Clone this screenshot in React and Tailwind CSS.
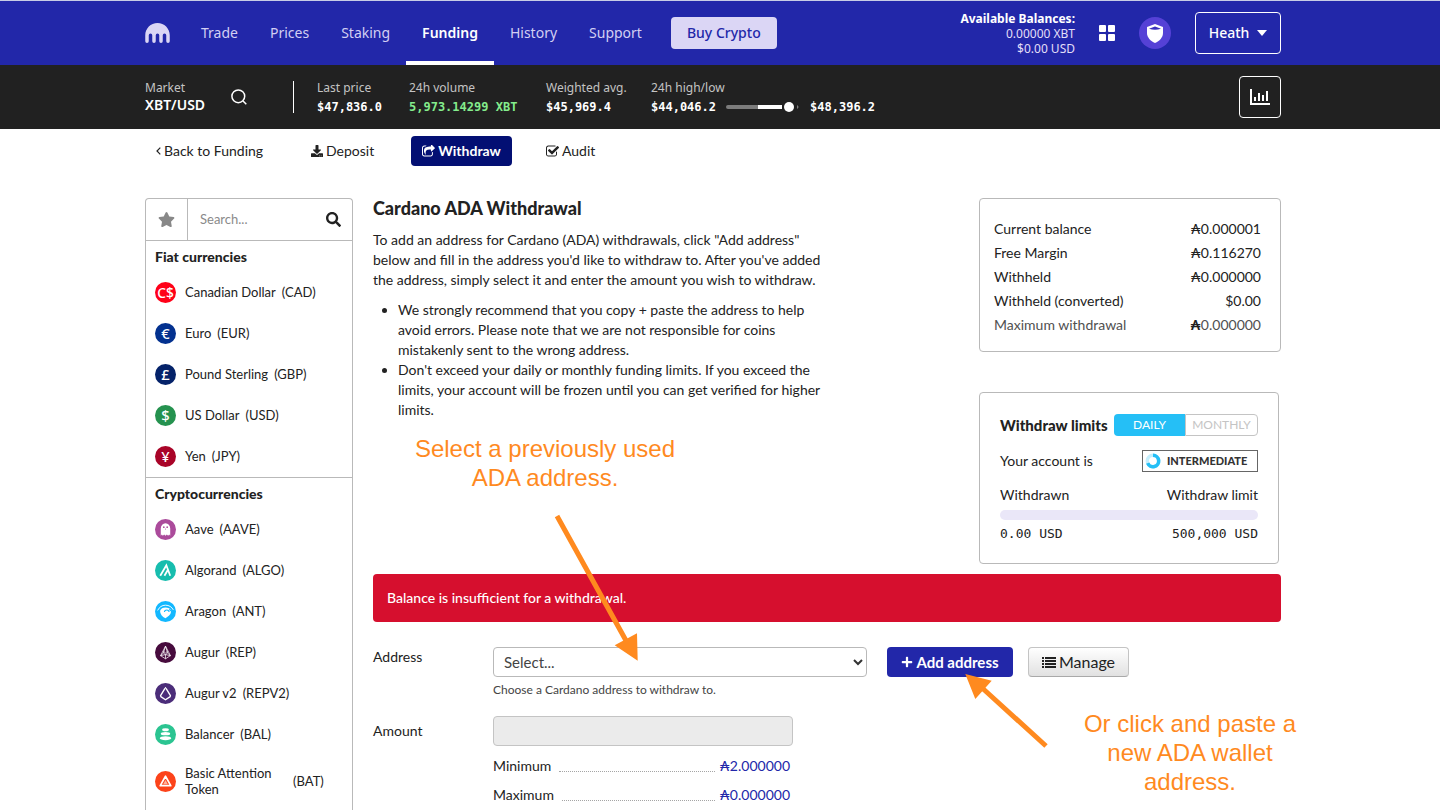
import React from "react";
import { FaStar, FaSearch, FaDownload, FaPlus } from "react-icons/fa";

const NAV = ["Trade", "Prices", "Staking", "Funding", "History", "Support"];

function KrakenLogo() {
  return (
    <svg viewBox="0 0 196 160" className="h-5 w-[25px]" fill="#dbd6f5" aria-label="Kraken">
      <path d="M98 0C44 0 0 44 0 98v48a14 14 0 0 0 28 0v-48a14 14 0 0 1 28 0v48a14 14 0 0 0 28 0v-48a14 14 0 0 1 28 0v48a14 14 0 0 0 28 0v-48a14 14 0 0 1 28 0v48a14 14 0 0 0 28 0v-48C196 44 152 0 98 0z" />
    </svg>
  );
}

function ShareSquare() {
  return (
    <svg viewBox="64 100 1680 1460" className="h-3 w-[13px]" fill="currentColor" aria-hidden="true">
      <path d="M1472 989v259q0 119-84.5 203.5t-203.5 84.5h-832q-119 0-203.5-84.5t-84.5-203.5v-832q0-119 84.5-203.5t203.5-84.5h255q13 0 22.5 9.5t9.5 22.5q0 27-26 32-77 26-133 60-10 4-16 4h-112q-66 0-113 47t-47 113v832q0 66 47 113t113 47h832q66 0 113-47t47-113v-214q0-19 18-28 28-13 54-37 16-16 35-8 21 9 21 29zm237-496l-384 384q-18 19-45 19-12 0-25-5-39-17-39-59v-192h-160q-323 0-438 131-119 137-74 473 3 23-20 34-8 2-12 2-16 0-26-13-10-14-21-31t-39.5-68.5-49.5-99.5-38.5-114-17.5-122q0-49 3.5-91t14-90 28-88 47-81.5 68.5-74 94.5-61.5 124.5-48.5 159.5-30.5 196.5-11h160v-192q0-42 39-59 13-5 25-5 26 0 45 19l384 384q19 19 19 45t-19 45z" />
    </svg>
  );
}

function CheckSquare() {
  return (
    <svg viewBox="0 100 1664 1460" className="h-3 w-[13px]" fill="currentColor" aria-hidden="true">
      <path d="M1408 930v318q0 119-84.5 203.5t-203.5 84.5h-832q-119 0-203.5-84.5t-84.5-203.5v-832q0-119 84.5-203.5t203.5-84.5h832q63 0 117 25 15 7 18 23 3 17-9 29l-49 49q-10 10-23 10-3 0-9-2-23-6-45-6h-832q-66 0-113 47t-47 113v832q0 66 47 113t113 47h832q66 0 113-47t47-113v-254q0-13 9-22l64-64q10-10 23-10 6 0 12 3 20 8 20 29zm231-489l-814 814q-24 24-57 24t-57-24l-430-430q-24-24-24-57t24-57l110-110q24-24 57-24t57 24l263 263 647-647q24-24 57-24t57 24l110 110q24 24 24 57t-24 57z" />
    </svg>
  );
}

function ListIcon() {
  return (
    <svg viewBox="0 0 14 11" className="h-[11px] w-[14px]" fill="currentColor" aria-hidden="true">
      <path d="M0 0h2v2H0zM3 0h11v2H3zM0 3h2v2H0zM3 3h11v2H3zM0 6h2v2H0zM3 6h11v2H3zM0 9h2v2H0zM3 9h11v2H3z" />
    </svg>
  );
}

function Header() {
  return (
    <header className="border-t border-[#c8cce6] bg-[#2227a9] pr-[14px] font-['Noto_Sans',sans-serif]">
      <div className="mx-auto flex h-16 w-full max-w-[1136px] items-center">
        <a href="#home" aria-label="Kraken home"><KrakenLogo /></a>
        <nav className="ml-[15px] flex h-16 items-stretch text-sm">
          {NAV.map((n) => (
            <a
              key={n}
              href={"#" + n.toLowerCase()}
              className={
                n === "Funding"
                  ? "flex items-center border-y-4 border-t-transparent border-b-white px-4 font-semibold text-white"
                  : "flex items-center px-4 text-[#d3cff3]"
              }
            >
              {n}
            </a>
          ))}
        </nav>
        <button className="ml-[13px] h-8 rounded bg-[#dbd6f5] px-4 text-sm font-medium text-[#2227a9]">Buy Crypto</button>
        <div className="ml-auto text-right text-xs leading-[15px] text-[#e2dff8]">
          <div className="font-bold text-white">Available Balances:</div>
          <div>0.00000 XBT</div>
          <div>$0.00 USD</div>
        </div>
        <button className="ml-6" aria-label="Apps">
          <svg viewBox="0 0 16 16" className="size-4" fill="#fff">
            <rect width="7" height="7" rx="1" />
            <rect x="9" width="7" height="7" rx="1" />
            <rect y="9" width="7" height="7" rx="1" />
            <rect x="9" y="9" width="7" height="7" rx="1" />
          </svg>
        </button>
        <button className="ml-6" aria-label="Security">
          <svg viewBox="0 0 32 32" className="size-8">
            <circle cx="16" cy="16" r="16" fill="#5541d6" />
            <path d="M16 7l8 3v6c0 4.500-3.500 8-8 10-4.500-2-8-5.500-8-10v-6z" fill="#fff" />
            <path d="M10 11.800l6-2.300 6 2.300q-6 1.800-12 0z" fill="#3a2fbd" />
          </svg>
        </button>
        <button className="ml-6 flex h-[42px] w-[86px] items-center justify-center gap-2 rounded border border-white text-sm font-medium text-white">
          Heath
          <svg viewBox="0 0 10 6" className="h-1.5 w-2.5" fill="#fff"><path d="M0 0h10L5 6z" /></svg>
        </button>
      </div>
    </header>
  );
}

function Stat({ label, className, children }) {
  return (
    <div className={className}>
      <div className="pt-px text-xs leading-[18px] text-[#c4c4c4]">{label}</div>
      <div className="font-['DejaVu_Sans_Mono',monospace] text-xs leading-5 font-bold">{children}</div>
    </div>
  );
}

function Ticker() {
  return (
    <div className="bg-[#212121] pr-[14px] font-['Noto_Sans',sans-serif] text-white">
      <div className="mx-auto flex h-16 w-full max-w-[1136px] items-center">
        <div className="w-[86px] pb-0.5">
          <div className="text-xs leading-[18px] text-[#c4c4c4]">Market</div>
          <div className="text-sm leading-4 font-semibold">XBT/USD</div>
        </div>
        <button className="w-[62px]" aria-label="Search markets">
          <svg viewBox="0 0 16 16" className="size-4" fill="none" stroke="#fff" strokeWidth="1.500">
            <circle cx="7.300" cy="7.300" r="6.400" />
            <path d="M12 12l3.300 3.300" />
          </svg>
        </button>
        <div className="h-8 border-l border-white" />
        <Stat label="Last price" className="ml-[23px] w-[92px]">$47,836.0</Stat>
        <Stat label="24h volume" className="w-[137px]"><span className="text-[#84ec8c]">5,973.14299 XBT</span></Stat>
        <Stat label="Weighted avg." className="w-[105px]">$45,969.4</Stat>
        <Stat label="24h high/low">
          <span className="flex items-center gap-2.5">
            $44,046.2
            <svg viewBox="0 0 74 10" className="h-2.5 w-[74px]">
              <rect y="3" width="34" height="4" rx="2" fill="#7c7c7c" />
              <rect x="32" y="3" width="24" height="4" fill="#fff" />
              <circle cx="63" cy="5" r="5" fill="#fff" />
              <path d="M71 3q3 2 0 4z" fill="#7c7c7c" />
            </svg>
            $48,396.2
          </span>
        </Stat>
        <button className="ml-auto flex size-[42px] items-center justify-center rounded border border-white" aria-label="Chart">
          <svg viewBox="0 0 20 16" className="h-4 w-5" fill="#fff">
            <path d="M0 0h2v14h18v2H0zM4 8h2v4H4zM8 4h2v8H8zM12 6h2v6h-2zM16 2h2v10h-2z" />
          </svg>
        </button>
      </div>
    </div>
  );
}

function Glyph({ children, size }) {
  return (
    <text x="10" y="15" textAnchor="middle" fontSize={size || 14} fill="#fff" fontWeight="500" fontFamily="Noto Sans, sans-serif">{children}</text>
  );
}

const FIAT = [
  { name: "Canadian Dollar", code: "CAD", color: "#ff0018", art: <Glyph size={13}>C$</Glyph> },
  { name: "Euro", code: "EUR", color: "#03318f", art: <Glyph>€</Glyph> },
  { name: "Pound Sterling", code: "GBP", color: "#042269", art: <Glyph>£</Glyph> },
  { name: "US Dollar", code: "USD", color: "#25924f", art: <Glyph>$</Glyph> },
  { name: "Yen", code: "JPY", color: "#a90428", art: <Glyph>¥</Glyph> },
];

const CRYPTO = [
  {
    name: "Aave", code: "AAVE", color: "#ab4b9b",
    art: (
      <>
        <path d="M5.500 9a4.500 5 0 0 1 9 0v7l-1-1.200-1 1.200-1.200-1.200-1.300 1.200-1.300-1.200L7.500 16l-1-1.200-1 1.200z" fill="#fff" />
        <circle cx="8.400" cy="7.800" r=".8" fill="#ab4b9b" />
        <circle cx="11.600" cy="7.800" r=".8" fill="#ab4b9b" />
        <circle cx="10" cy="9.500" r=".5" fill="#ab4b9b" />
      </>
    ),
  },
  {
    name: "Algorand", code: "ALGO", color: "#17bdae",
    art: <path d="M5 15l5.800-10 3.700 10M9 15l3.300-5.700" fill="none" stroke="#fff" strokeWidth="1.700" />,
  },
  {
    name: "Aragon", code: "ANT", color: "#13b8ff",
    art: (
      <>
        <path d="M2.500 9Q5 4 10 4t7.500 4.500" fill="none" stroke="#fff" strokeWidth=".9" />
        <path d="M4.800 9.500Q6 6.300 10 6.300t5.500 3q-.3 3-2.300 4.700L10 16.500Q5 14 4.800 9.500z" fill="#fff" />
        <path d="M9 10.500q0-2 2.200-2t2.200 2M13.500 8l3 2.500" fill="none" stroke="#13b8ff" strokeWidth="1" />
      </>
    ),
  },
  {
    name: "Augur", code: "REP", color: "#470b3d",
    art: (
      <path
        d="M10 4L5.300 13l4.700 3 4.700-3zM10 4L8 10.500l2 1.500 2-1.500zM5.300 13L8 10.500M14.700 13L12 10.500M10 12v4M5.300 13l4.700-1 4.700 1M7.700 8.500l2.300 2 2.300-2"
        fill="none" stroke="#fff" strokeWidth=".7"
      />
    ),
  },
  {
    name: "Augur v2", code: "REPV2", color: "#4b2d79",
    art: (
      <path d="M9.200 5.500L5.300 12M10.800 5.500l3.900 6.500M5.500 13l4.500 3 4.500-3M10 4.500h.01" fill="none" stroke="#fff" strokeWidth="1.300" strokeLinecap="round" />
    ),
  },
  {
    name: "Balancer", code: "BAL", color: "#2bc491",
    art: (
      <g fill="#fff">
        <ellipse cx="10" cy="5.500" rx="3.200" ry="1.400" />
        <ellipse cx="10" cy="9.200" rx="4.500" ry="1.600" />
        <ellipse cx="10" cy="13.500" rx="5.500" ry="1.900" />
      </g>
    ),
  },
  {
    name: "Basic Attention Token", code: "BAT", color: "#fc431a",
    art: (
      <>
        <path d="M10 5L5 14h10z" fill="none" stroke="#fff" strokeWidth="1.600" strokeLinejoin="round" />
        <path d="M10 8.500l-2.200 4h4.400z" fill="#ffb49f" />
      </>
    ),
  },
];

function CurrencyList({ title, items }) {
  return (
    <section className="border-t border-[#b9b9b9] px-[9px]">
      <h3 className="flex h-[31px] items-center pt-px text-sm font-black">{title}</h3>
      <ul>
        {items.map((c) => (
          <li key={c.code}>
            <a href={"#" + c.code} className={c.code === "BAT" ? "flex h-[52px] items-center" : "flex h-10 items-center mb-px"}>
              <svg viewBox="0 0 20 20" className="size-[21px] shrink-0">
                <circle cx="10" cy="10" r="10" fill={c.color} />
                {c.art}
              </svg>
              <span className={c.code === "BAT" ? "ml-[9px] w-[108px] text-[13px] leading-4" : "ml-[9px] text-[13px] leading-4"}>{c.name}</span>
              <span className={c.code === "BAT" ? "text-[13px] leading-4" : "ml-1.5 text-[13px] leading-4"}>({c.code})</span>
            </a>
          </li>
        ))}
      </ul>
    </section>
  );
}

const BALANCES = [
  ["Current balance", "₳", "0.000001"],
  ["Free Margin", "₳", "0.116270"],
  ["Withheld", "₳", "0.000000"],
  ["Withheld (converted)", "$", "0.00"],
  ["Maximum withdrawal", "₳", "0.000000"],
];

function LimitRow({ name, value, className }) {
  return (
    <div className={className}>
      <span>{name}</span>
      <span className="mr-1 mb-1 ml-2 flex-1 border-b border-dotted border-[#a5a5a5]" />
      <span className="text-[#2227a9]">{value}</span>
    </div>
  );
}

export default function App() {
  return (
    <div className="flex min-h-screen flex-col bg-white font-['Lato','Noto_Sans',sans-serif] text-[#222]">
      <Header />
      <Ticker />
      <div className="flex flex-1 flex-col pr-[14px]">
        <div className="mx-auto flex w-full max-w-[1136px] flex-1 flex-col">
          <nav className="mt-[7px] flex h-[30px] gap-[23px] text-sm">
            <a href="#funding" className="flex w-[132px] items-center gap-[3px] px-[11px]">
              <svg viewBox="0 0 5 8" className="h-2 w-[5px]" fill="none" stroke="currentColor" strokeWidth="1.200" aria-hidden="true">
                <path d="M4.300 .7L1 4l3.300 3.300" />
              </svg>
              Back to Funding
            </a>
            <a href="#deposit" className="flex w-[88px] items-center gap-[3px] px-[11px]"><FaDownload className="size-3" />Deposit</a>
            <a href="#withdraw" className="flex w-[101px] items-center justify-center gap-[3px] rounded bg-[#030f73] font-bold text-white"><ShareSquare />Withdraw</a>
            <a href="#audit" className="flex items-center gap-[3px] px-[11px]"><CheckSquare />Audit</a>
          </nav>
          <div className="mt-8 flex flex-1 gap-5">
            <aside className="w-[208px] shrink-0 rounded-t border border-b-0 border-[#b9b9b9]">
              <div className="flex h-[41px] items-stretch">
                <button className="flex w-[42px] items-center justify-center border-r border-[#b9b9b9]" aria-label="Favourites">
                  <FaStar className="size-[17px] text-[#888]" />
                </button>
                <input aria-label="Search currencies" placeholder="Search..." className="w-0 flex-1 px-3 text-[13px] outline-none placeholder:text-[#8a8a8a]" />
                <button className="pr-[11px]" aria-label="Search"><FaSearch className="size-[15px]" /></button>
              </div>
              <CurrencyList title="Fiat currencies" items={FIAT} />
              <CurrencyList title="Cryptocurrencies" items={CRYPTO} />
            </aside>

            <main className="relative min-w-0 flex-1">
              <div className="flex justify-between">
                <div className="w-[460px] text-sm leading-5">
                  <h1 className="mb-3 text-lg leading-5 font-black">Cardano ADA Withdrawal</h1>
                  <p className="mb-2.5">
                    To add an address for Cardano (ADA) withdrawals, click "Add address"<br />
                    below and fill in the address you'd like to withdraw to. After you've added<br />
                    the address, simply select it and enter the amount you wish to withdraw.
                  </p>
                  <ul className="list-disc pl-[25px]">
                    <li>
                      We strongly recommend that you copy + paste the address to help<br />
                      avoid errors. Please note that we are not responsible for coins<br />
                      mistakenly sent to the wrong address.
                    </li>
                    <li>
                      Don't exceed your daily or monthly funding limits. If you exceed the<br />
                      limits, your account will be frozen until you can get verified for higher<br />
                      limits.
                    </li>
                  </ul>
                </div>
                <div className="w-[302px] shrink-0">
                  <dl className="rounded border border-[#b9b9b9] pt-[18px] pr-[19px] pb-[14px] pl-[14px] text-sm leading-6">
                    {BALANCES.map(([k, unit, v], i) => (
                      <div key={k} className={i === 4 ? "flex justify-between text-[#505050]" : "flex justify-between"}>
                        <dt>{k}</dt>
                        <dd><span className={i === 4 ? "font-bold text-[#222]" : ""}>{unit}</span>{v}</dd>
                      </div>
                    ))}
                  </dl>
                  <section className="mt-10 mr-0.5 rounded border border-[#b9b9b9] px-5 pt-[21px] pb-[19px] text-sm leading-5">
                    <div className="flex h-[22px] items-center justify-between">
                      <h2 className="text-[15px] font-black">Withdraw limits</h2>
                      <div className="flex h-[22px] w-36 text-xs">
                        <button className="flex-1 rounded-l bg-[#25bff6] text-white">DAILY</button>
                        <button className="flex-1 rounded-r border border-[#c4c4c4] text-[#c4c4c4]">MONTHLY</button>
                      </div>
                    </div>
                    <div className="mt-[14px] flex h-[22px] items-center justify-between">
                      <span>Your account is</span>
                      <span className="flex h-[22px] w-[116px] items-center gap-1.5 border border-[#666] pl-0.5 text-[11px] font-black text-[#333]">
                        <svg viewBox="0 0 16 16" className="size-4" fill="none" strokeWidth="3.500">
                          <circle cx="8" cy="8" r="5.700" stroke="#c5eefc" />
                          <path d="M8 2.300a5.700 5.700 0 1 1-5.300 7.800" stroke="#25bff6" />
                        </svg>
                        INTERMEDIATE
                      </span>
                    </div>
                    <div className="mt-[13px] flex justify-between"><span>Withdrawn</span><span>Withdraw limit</span></div>
                    <div className="mt-[5px] h-2.5 rounded-full bg-[#eae7f8]" />
                    <div className="mt-1 flex justify-between font-['DejaVu_Sans_Mono',monospace] text-[13px]"><span>0.00 USD</span><span>500,000 USD</span></div>
                  </section>
                </div>
              </div>

              <div role="alert" className="mt-2.5 flex h-12 items-center rounded bg-[#d60f2e] px-[14px] text-sm font-medium text-white">
                Balance is insufficient for a withdrawal.
              </div>

              <form className="mt-[25px] text-sm leading-5">
                <div className="flex">
                  <label htmlFor="address" className="w-[120px] shrink-0">Address</label>
                  <div className="w-[374px]">
                    <div className="relative">
                      <select id="address" className="h-[30px] w-full appearance-none rounded border border-[#b9b9b9] bg-white px-2.5 text-[15px] text-[#444]">
                        <option>Select...</option>
                      </select>
                      <svg viewBox="0 0 10 7" className="pointer-events-none absolute top-3 right-1 h-[7px] w-2.5" fill="none" stroke="#333" strokeWidth="2">
                        <path d="M1 1l4 4 4-4" />
                      </svg>
                    </div>
                    <p className="mt-[5px] text-xs leading-4 text-[#444]">Choose a Cardano address to withdraw to.</p>
                  </div>
                  <button type="button" className="ml-5 flex h-[30px] w-[126px] items-center justify-center gap-[3px] rounded bg-[#2227a9] text-[15px] font-bold text-white">
                    <FaPlus className="size-3" />Add address
                  </button>
                  <button type="button" className="ml-[15px] flex h-[30px] w-[101px] items-center justify-center gap-[3px] rounded border border-[#c4c4c4] border-b-[#a9a9a9] bg-linear-to-b from-white to-[#e1e1e1] text-base">
                    <ListIcon />Manage
                  </button>
                </div>
                <div className="mt-[18px] flex">
                  <label htmlFor="amount" className="w-[120px] shrink-0 leading-[30px]">Amount</label>
                  <div className="w-[300px]">
                    <input id="amount" disabled className="h-[30px] w-full rounded border border-[#c4c4c4] bg-[#ebebeb] px-2.5" />
                    <LimitRow name="Minimum" value="₳2.000000" className="mt-2.5 mr-[3px] flex items-end" />
                    <LimitRow name="Maximum" value="₳0.000000" className="mt-[9px] mr-[3px] flex items-end" />
                  </div>
                </div>
              </form>

              <svg viewBox="0 0 908 612" className="pointer-events-none absolute top-0 left-0 h-[612px] w-[908px]" fill="#ff8a1f" stroke="#ff8a1f">
                <path d="M184 318l72 130M673 548l-66-60" strokeWidth="5" fill="none" />
                <path d="M264.700 462.700L241.700 447.300 264 435.300zM592.300 476L618.700 482.700 602.300 501z" stroke="none" />
              </svg>
              <p className="pointer-events-none absolute top-[236px] left-[22px] w-[300px] text-center font-['Liberation_Sans',sans-serif] text-2xl leading-[29px] text-[#ff8a1f]">
                Select a previously used<br />ADA address.
              </p>
              <p className="pointer-events-none absolute top-[511px] left-[697px] w-60 text-center font-['Liberation_Sans',sans-serif] text-2xl leading-[29px] text-[#ff8a1f]">
                Or click and paste a<br />new ADA wallet<br />address.
              </p>
            </main>
          </div>
        </div>
      </div>
    </div>
  );
}
